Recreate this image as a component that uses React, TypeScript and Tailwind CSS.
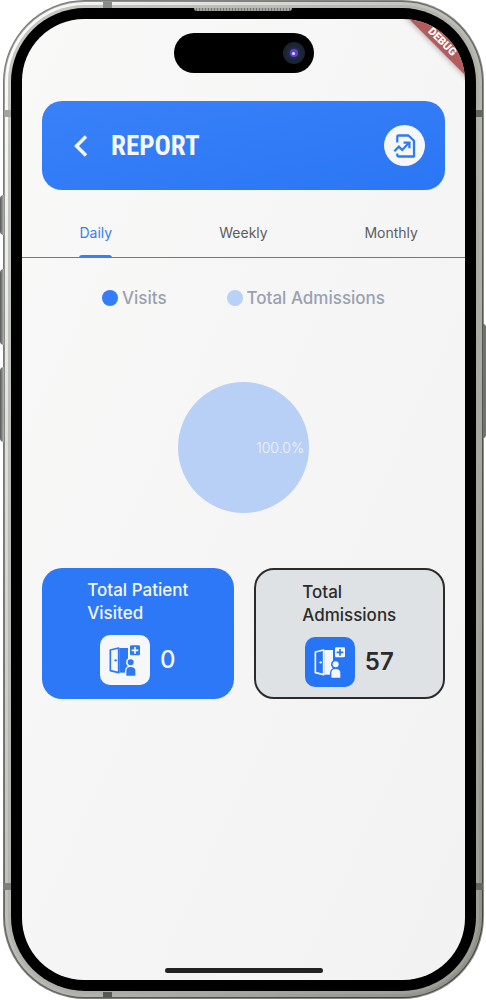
import { useState } from "react";

type Tab = "Daily" | "Weekly" | "Monthly";

const TABS: Tab[] = ["Daily", "Weekly", "Monthly"];

function ReportIcon() {
  return (
    <svg viewBox="158 112 70 78" className="h-[26px] w-[23px]" fill="none" stroke="currentColor" strokeWidth="7" aria-hidden="true">
      <path d="M171 140V123Q171 119 175 119H205L222 135V183H175Q171 183 171 179V174" strokeLinejoin="round" />
      <path d="M162 167L176 153L186 163L206 142" />
      <path d="M190 141H208V158" />
    </svg>
  );
}

/* Open door, a visitor and a medical plus; "cut" paints the gaps between the shapes. */
function PatientIcon({ cut }: { cut: string }) {
  return (
    <svg viewBox="180 223 150 150" className="h-[50px] w-[50px]" fill="currentColor" aria-hidden="true">
      <path d="M238 262H264V336H238Z" />
      <path d="M211 268L236 262V336L211 330Z" fill={cut} stroke="currentColor" strokeWidth="5" strokeLinejoin="round" />
      <circle cx="227" cy="299" r="3.5" />
      <rect x="266" y="250" width="38" height="38" rx="7" fill={cut} />
      <rect x="270" y="254" width="30" height="30" rx="4" />
      <path d="M285 259V279M275 269H295" stroke={cut} strokeWidth="5" />
      <circle cx="272" cy="305" r="14" fill={cut} />
      <path d="M255 348V332Q255 315 272 315Q289 315 289 332V348Z" fill={cut} />
      <circle cx="272" cy="305" r="9" />
      <path d="M259 345V331Q259 319 272 319Q286 319 286 331V345Z" />
    </svg>
  );
}

function LegendItem({ label, dot }: { label: string; dot: string }) {
  return (
    <li className="flex items-center gap-1">
      <span className={`size-4 rounded-full ${dot}`} />
      <span>{label}</span>
    </li>
  );
}

function StatCard({ lines, value, filled }: { lines: string[]; value: number; filled: boolean }) {
  return (
    <section
      className={`flex flex-col items-center gap-2.5 rounded-[20px] pt-[11px] pb-2.5 ${
        filled ? "bg-[#2c78f6] text-[#f3f6fb]" : "border-2 border-[#2b2b2b] bg-[#dfe2e4] text-[#2b2b2b]"
      }`}
    >
      <h2 className="text-[17px] leading-[23px] font-medium">
        {lines.map((line) => (
          <span key={line} className="block">
            {line}
          </span>
        ))}
      </h2>
      <div className="flex items-center gap-2.5">
        <div className={`rounded-[10px] ${filled ? "bg-[#f6f7f8] text-[#2c78f6]" : "bg-[#2675f7] text-[#f6f7f8]"}`}>
          <PatientIcon cut={filled ? "#f6f7f8" : "#2675f7"} />
        </div>
        <p className={`text-2xl ${filled ? "font-medium" : "font-semibold"}`}>{value}</p>
      </div>
    </section>
  );
}

function PhoneHardware() {
  return (
    <div aria-hidden="true">
      <div className="absolute top-[195px] left-0 h-10 w-1 rounded-l-sm bg-linear-to-r from-[#555855] to-[#b4b6b3]" />
      <div className="absolute top-[269px] left-0 h-[76px] w-1 rounded-l-sm bg-linear-to-r from-[#555855] to-[#b4b6b3]" />
      <div className="absolute top-[367px] left-0 h-[75px] w-1 rounded-l-sm bg-linear-to-r from-[#555855] to-[#b4b6b3]" />
      <div className="absolute top-[324px] right-0 h-[114px] w-[3px] rounded-r-sm bg-[#70726f]" />
      <div className="absolute top-[110px] left-1 h-[7px] w-[7px] bg-[#a3a3a1]" />
      <div className="absolute bottom-[110px] left-1 h-[7px] w-[7px] bg-[#7e7f7c]" />
      <div className="absolute top-[110px] right-[3px] h-[7px] w-[7px] bg-[#62645f]" />
      <div className="absolute right-[3px] bottom-[110px] h-[7px] w-[7px] bg-[#62645f]" />
      <div className="absolute top-[2px] left-[103px] h-1.5 w-[9px] bg-[#8a8c88]" />
      <div className="absolute bottom-[3px] left-[103px] h-[5px] w-[9px] bg-[#555752]" />
      <div className="absolute inset-x-0 top-2 flex justify-center">
        <div className="h-[3px] w-[98px] rounded-b-sm bg-[repeating-linear-gradient(90deg,#a5a7a3_0_2px,#747672_2px_3px)]" />
      </div>
    </div>
  );
}

export default function App() {
  const [tab, setTab] = useState<Tab>("Daily");

  return (
    <div className="relative flex min-h-screen bg-white pr-0.5 pb-px pl-[3px] font-['Inter','Noto_Sans',sans-serif]">
      <div className="flex flex-1 rounded-[82px] bg-linear-to-r from-[#777977] to-[#8b8d89] p-px">
        <div className="flex flex-1 rounded-[81px] bg-linear-to-br from-[#a0a39f] via-[#60635c] to-[#3c3f38] p-px">
          <div className="flex flex-1 rounded-[80px] bg-linear-to-br from-white via-[#b9bab5] to-[#8d8f87] p-[3px]">
            <div className="flex flex-1 rounded-[77px] bg-linear-to-br from-[#c6c8c2] to-[#9b9d94] p-[3px]">
              <div className="flex flex-1 rounded-[74px] bg-black p-[11px]">
                <main className="relative flex flex-1 flex-col overflow-hidden rounded-[62px] bg-linear-to-br from-[#f9f9f8] to-[#f2f2f3]">
                  <div className="flex justify-center pt-3.5">
                    <div className="flex h-10 w-[140px] items-center justify-end rounded-full bg-black pr-[9px]">
                      <div className="flex size-[22px] items-center justify-center rounded-full bg-[radial-gradient(circle,#29295d_25%,#1b2634_50%,#17202a_100%)]">
                        <div className="flex size-2 items-center justify-center rounded-full bg-[#6043c5]">
                          <div className="size-[3px] rounded-full bg-[#e5dcff]" />
                        </div>
                      </div>
                    </div>
                  </div>

                  <header className="mx-5 mt-7 flex h-[89px] items-center rounded-[20px] bg-linear-to-br from-[#3881f9] to-[#2b76f5] pr-5 pl-[30px] text-[#f5f7fa]">
                    <button type="button" aria-label="Back" className="mr-[22px]">
                      <svg viewBox="0 0 17 24" className="h-6 w-[17px]" fill="none" stroke="currentColor" strokeWidth="3.5" aria-hidden="true">
                        <path d="M14 2.500L4.500 12L14 21.500" />
                      </svg>
                    </button>
                    <h1 className="flex-1 font-['Liberation_Sans_Narrow','Roboto_Condensed','Roboto',sans-serif] text-[27px] leading-8 font-bold">REPORT</h1>
                    <button type="button" aria-label="Export report" className="flex size-[41px] items-center justify-center rounded-full bg-[#f6f7f7] text-[#2f7bf6]">
                      <ReportIcon />
                    </button>
                  </header>

                  <div role="tablist" aria-label="Report period" className="mt-6 grid grid-cols-3 border-b border-[#777777]">
                    {TABS.map((name) => (
                      <button
                        key={name}
                        type="button"
                        role="tab"
                        aria-selected={tab === name}
                        onClick={() => setTab(name)}
                        className={`flex h-[43px] justify-center text-sm ${tab === name ? "text-[#367ff5]" : "text-[#5c5d61]"}`}
                      >
                        <span className="flex h-11 flex-col justify-between pt-[9px]">
                          {name}
                          <span className={`h-[3px] rounded-t-full ${tab === name ? "bg-[#367ff5]" : "bg-transparent"}`} />
                        </span>
                      </button>
                    ))}
                  </div>

                  <ul className="mt-7 flex justify-center gap-[60px] text-[17px] leading-6 font-medium text-[#99a1b0]">
                    <LegendItem label="Visits" dot="bg-[#337df8]" />
                    <LegendItem label="Total Admissions" dot="bg-[#b8d1f6]" />
                  </ul>

                  <div className="mt-[72px] flex justify-center">
                    <div className="flex size-[131px] items-center justify-end rounded-full bg-[#b8d0f5] pr-[5px] text-sm font-light text-[#f1f4f9]">
                      100.0%
                    </div>
                  </div>

                  <div className="mx-5 mt-[55px] grid grid-cols-2 gap-5">
                    <StatCard lines={["Total Patient", "Visited"]} value={0} filled />
                    <StatCard lines={["Total", "Admissions"]} value={57} filled={false} />
                  </div>

                  <div className="mt-auto flex justify-center pb-[7px]">
                    <div className="h-[5px] w-[158px] rounded-full bg-[#222222]" />
                  </div>

                  <div className="absolute top-4 -right-[22px] h-3.5 w-[90px] rotate-45 bg-[#b45b5b] text-center font-['Roboto',sans-serif] text-[11px] leading-3.5 font-black text-white shadow-[0_0_6px_rgba(0,0,0,0.4)]">
                    DEBUG
                  </div>
                </main>
              </div>
            </div>
          </div>
        </div>
      </div>
      <PhoneHardware />
    </div>
  );
}
